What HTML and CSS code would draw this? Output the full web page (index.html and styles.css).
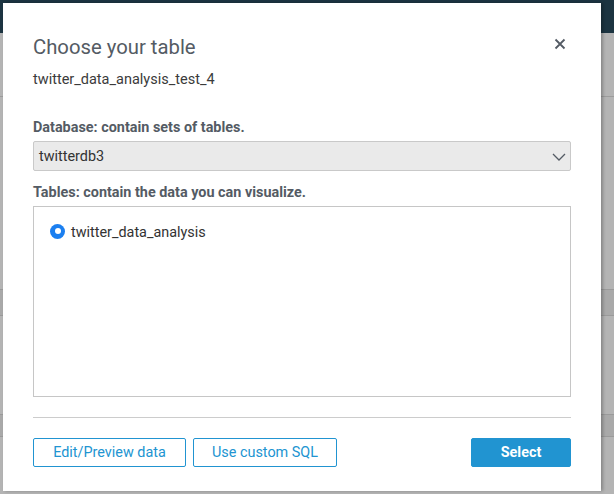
FILE: index.html
```html
<!DOCTYPE html>
<html>
<head>
<meta charset="utf-8">
<link rel="stylesheet" href="styles.css">
</head>
<body>
<div class="page">
  <div class="topbar"></div>
  <div class="workspace">
    <div class="ws-line l1"></div>
    <div class="ws-band b1"></div>
    <div class="ws-band b2"></div>
  </div>
</div>
<div class="modal">
  <div class="modal-head">
    <h1 class="title">Choose your table</h1>
    <svg class="close" width="12" height="12" viewBox="0 0 12 12"><path d="M1.5 1.5 L10.5 10.5 M10.5 1.5 L1.5 10.5" stroke="#545b64" stroke-width="1.8" fill="none"/></svg>
  </div>
  <div class="subtitle">twitter_data_analysis_test_4</div>
  <label class="field-label first">Database: contain sets of tables.</label>
  <div class="select">
    <span>twitterdb3</span>
    <svg class="chev" width="14" height="8" viewBox="0 0 14 8"><path d="M1 1 L7 7 L13 1" stroke="#545b64" stroke-width="1.3" fill="none"/></svg>
  </div>
  <label class="field-label">Tables: contain the data you can visualize.</label>
  <div class="list">
    <div class="option">
      <span class="radio"><span class="dot"></span></span>
      <span class="opt-text">twitter_data_analysis</span>
    </div>
  </div>
  <div class="divider"></div>
  <div class="footer">
    <button class="btn outline">Edit/Preview data</button>
    <button class="btn outline">Use custom SQL</button>
    <span class="spacer"></span>
    <button class="btn primary">Select</button>
  </div>
</div>
</body>
</html>
```

FILE: styles.css
```css
html, body {
  margin: 0;
  padding: 0;
}
body {
  width: 614px;
  height: 494px;
  overflow: hidden;
  font-family: Roboto, "Liberation Sans", sans-serif;
  color: #545b64;
  position: relative;
}
.page {
  height: 494px;
  display: flex;
  flex-direction: column;
}
.topbar {
  height: 33px;
  background: #1c3441;
}
.workspace {
  flex: 1;
  background: #b4b4b4;
  position: relative;
}
.ws-line {
  position: absolute;
  left: 0;
  right: 0;
  height: 1px;
  background: #9c9c9c;
}
.l1 { top: 63px; }
.ws-band {
  position: absolute;
  left: 0;
  right: 0;
  background: #a9a9a9;
  border-top: 1px solid #9a9a9a;
  border-bottom: 1px solid #9a9a9a;
}
.b1 { top: 256px; height: 25px; }
.b2 { top: 381px; height: 21px; }
.modal {
  position: absolute;
  left: 3px;
  top: 3px;
  width: 598px;
  height: 488px;
  box-sizing: border-box;
  background: #fff;
  padding: 0 30px;
  box-shadow: 2px 0 3px rgba(0,0,0,0.25);
  display: flex;
  flex-direction: column;
}
.modal-head {
  display: flex;
  justify-content: space-between;
  align-items: center;
  margin-top: 32px;
  height: 24px;
}
.title {
  margin: 0;
  font-size: 20.3px;
  font-weight: 400;
  color: #545b64;
  line-height: 24px;
}
.close {
  margin-right: 5px;
  margin-top: -6px;
}
.subtitle {
  margin-top: 12px;
  font-size: 14.5px;
  line-height: 18px;
  color: #3b3b3b;
}
.field-label {
  display: block;
  font-size: 14.4px;
  font-weight: 700;
  line-height: 18px;
  color: #545b64;
  margin-top: 13px;
}
.field-label.first {
  margin-top: 30px;
}
.select {
  margin-top: 4px;
  height: 30px;
  box-sizing: border-box;
  border: 1px solid #c9c9c9;
  border-radius: 2px;
  background: #eaeaea;
  display: flex;
  align-items: center;
  justify-content: space-between;
  padding: 0 5px 0 5px;
  font-size: 14.4px;
  color: #333;
}
.chev {
  margin-right: -1px;
  margin-top: 1px;
}
.list {
  margin-top: 4px;
  height: 191px;
  box-sizing: border-box;
  border: 1px solid #c6c6c6;
  padding: 14px 0 0 16px;
}
.option {
  display: flex;
  align-items: center;
  gap: 6px;
}
.radio {
  width: 15px;
  height: 15px;
  border-radius: 50%;
  background: #1b7ff0;
  display: flex;
  align-items: center;
  justify-content: center;
}
.dot {
  width: 6px;
  height: 6px;
  border-radius: 50%;
  background: #fff;
}
.opt-text {
  font-size: 14.4px;
  color: #333;
  margin-top: 3px;
}
.divider {
  margin-top: 20px;
  height: 1px;
  background: #cccccc;
}
.footer {
  margin-top: 20px;
  display: flex;
  gap: 7px;
}
.spacer {
  flex: 1;
}
.btn {
  height: 29px;
  box-sizing: border-box;
  font-family: Roboto, "Liberation Sans", sans-serif;
  font-size: 14.4px;
  border-radius: 2px;
  padding: 0;
  cursor: pointer;
}
.outline {
  background: #fff;
  border: 1px solid #2194d1;
  color: #2194d1;
}
.outline:first-child { width: 153px; }
.outline:nth-child(2) { width: 144px; }
.primary {
  width: 100px;
  background: #2194d1;
  border: 1px solid #2194d1;
  color: #fff;
  font-weight: 700;
}
```
